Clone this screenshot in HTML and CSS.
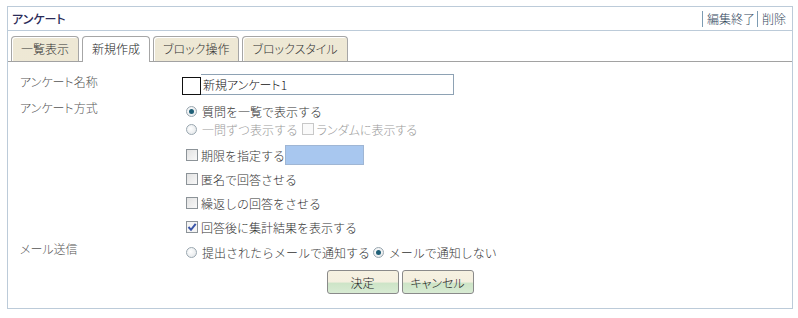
FILE: index.html
```html
<!DOCTYPE html>
<html lang="ja">
<head>
  <meta charset="UTF-8">
  <title>アンケート</title>
  <link rel="stylesheet" href="styles.css">
</head>
<body>

  <div class="panel">
    <!-- Header -->
    <div class="panel-head">
      <span class="panel-title">アンケート</span>
      <span class="head-links">
        <a class="head-link">編集終了</a><a class="head-link">削除</a>
      </span>
    </div>

    <!-- Tabs -->
    <div class="tabs">
      <div class="tab">一覧表示</div>
      <div class="tab active">新規作成</div>
      <div class="tab">ブロック操作</div>
      <div class="tab">ブロックスタイル</div>
    </div>

    <div class="form">
      <div class="row row-name">
        <div class="label">アンケート名称</div>
        <div class="name-field">
          <span class="icon-box"></span>
          <span class="text-input">新規アンケート1</span>
        </div>
      </div>

      <div class="row row-mode">
        <div class="label">アンケート方式</div>
        <div class="field">
          <div class="opt"><span class="radio checked"></span>質問を一覧で表示する</div>
          <div class="opt disabled"><span class="radio"></span>一問ずつ表示する <span class="check off"></span><span class="narrow">ランダムに表示する</span></div>
          <div class="opt spaced first"><span class="check"></span>期限を指定する<span class="date-box"></span></div>
          <div class="opt spaced"><span class="check"></span>匿名で回答させる</div>
          <div class="opt spaced"><span class="check"></span>繰返しの回答をさせる</div>
          <div class="opt spaced"><span class="check checked"><svg width="10" height="10" viewBox="0 0 10 10"><path d="M1.5 5 L4 7.8 L8.7 1.8" fill="none" stroke="#3a55a8" stroke-width="2"/></svg></span>回答後に集計結果を表示する</div>
        </div>
      </div>

      <div class="row row-mail">
        <div class="label">メール送信</div>
        <div class="field">
          <div class="opt"><span class="radio"></span>提出されたらメールで通知する <span class="radio checked"></span>メールで通知しない</div>
        </div>
      </div>

      <div class="buttons">
        <button class="btn">決定</button>
        <button class="btn">キャンセル</button>
      </div>
    </div>
  </div>

</body>
</html>
```

FILE: styles.css
```css
body {
  margin: 0;
  background-color: #ffffff;
  font-family: "Noto Sans CJK JP", "Noto Sans", sans-serif;
  font-size: 12px;
  font-weight: 300;
  color: #444;
}

.panel {
  margin: 6px 5px 0 7px;
  border: 1px solid #bccbd9;
}

.panel-head {
  height: 23px;
  border-bottom: 1px solid #bccbd9;
  display: flex;
  align-items: center;
  justify-content: space-between;
  padding: 0 5px 0 4px;
}

.panel-title {
  color: #2b2b58;
  font-weight: 500;
  font-feature-settings: "palt";
}

.head-links {
  display: flex;
  align-items: center;
}

.head-link {
  color: #34485e;
  border-left: 1px solid #7d9cb3;
  padding: 0 1px 0 4px;
  margin-left: 1px;
  line-height: 16px;
}

/* tabs */
.tabs {
  display: flex;
  align-items: flex-end;
  gap: 3px;
  padding: 0 0 0 3px;
  border-bottom: 1px solid #a2a2a2;
  height: 30px;
}

.tab {
  height: 24px;
  padding: 0 9px;
  border: 1px solid #a6a6a6;
  border-bottom: none;
  border-radius: 4px 4px 0 0;
  background-color: #f3efdf;
  background-image: radial-gradient(#e6e0c8 0.6px, transparent 0.8px);
  background-size: 2px 2px;
  box-shadow: inset 1px 1px 0 #ffffff;
  color: #333;
  line-height: 24px;
  font-feature-settings: "palt";
}

.tab.active {
  background: #ffffff;
  height: 25px;
  margin-bottom: -1px;
  color: #222;
}

/* form */
.form {
  padding: 12px 0 14px 12px;
}

.row {
  display: flex;
}

.label {
  width: 162px;
  flex-shrink: 0;
  color: #555;
  font-feature-settings: "palt";
}

.row-name .label {
  line-height: 16px;
}

.name-field {
  display: flex;
}

.icon-box {
  width: 17px;
  height: 16px;
  border: 1px solid #111;
  margin-top: 3px;
  background: #fff;
}

.text-input {
  width: 250px;
  height: 19px;
  border: 1px solid #8ea2b4;
  border-left: none;
  padding-left: 2px;
  line-height: 19px;
  color: #111;
  font-feature-settings: "palt";
}

.row-mode {
  margin-top: 7px;
}

.row-mode .label,
.row-mail .label {
  line-height: 12px;
}

.field {
  display: flex;
  flex-direction: column;
}

.opt {
  height: 18px;
  display: flex;
  align-items: center;
  padding-left: 4px;
  color: #333;
  white-space: pre;
}

.opt.spaced {
  margin-top: 6px;
}

.opt.first {
  margin-top: 8px;
}

.opt.disabled {
  color: #9a9a9a;
}

.narrow {
  font-feature-settings: "palt";
}

.radio {
  width: 9px;
  height: 9px;
  border: 1px solid #9aa7b0;
  border-radius: 50%;
  background: radial-gradient(circle at 40% 40%, #ffffff, #dfe3e6);
  margin-right: 5px;
  position: relative;
  flex-shrink: 0;
}

.radio.checked::after {
  content: "";
  position: absolute;
  left: 2px;
  top: 2px;
  width: 5px;
  height: 5px;
  border-radius: 50%;
  background: #1f5f77;
}

.check {
  width: 10px;
  height: 10px;
  border: 1px solid #8c9398;
  background: linear-gradient(135deg, #e2e2e2, #f8f8f8);
  margin-right: 3px;
  flex-shrink: 0;
  display: flex;
  align-items: center;
  justify-content: center;
}

.check.off {
  border-color: #c8c8c8;
  background: #fafafa;
  margin-left: 1px;
}

.check.checked {
  background: #f4f4f4;
}

.date-box {
  width: 77px;
  height: 18px;
  border: 1px solid #9fb6d4;
  background: #a8c7ef;
}

.row-mail {
  margin-top: 7px;
}

.buttons {
  display: flex;
  justify-content: center;
  gap: 3px;
  margin: 9px 0 0 -12px;
}

.btn {
  width: 72px;
  height: 24px;
  padding: 0;
  border: 1px solid #8a8a8a;
  border-radius: 3px;
  background: linear-gradient(#f6f1e1 0%, #f4efdf 50%, #cde4c7 55%, #d8ebd3 100%);
  font-family: inherit;
  font-size: 12px;
  font-weight: 300;
  font-feature-settings: "palt";
  color: #222;
}
```
